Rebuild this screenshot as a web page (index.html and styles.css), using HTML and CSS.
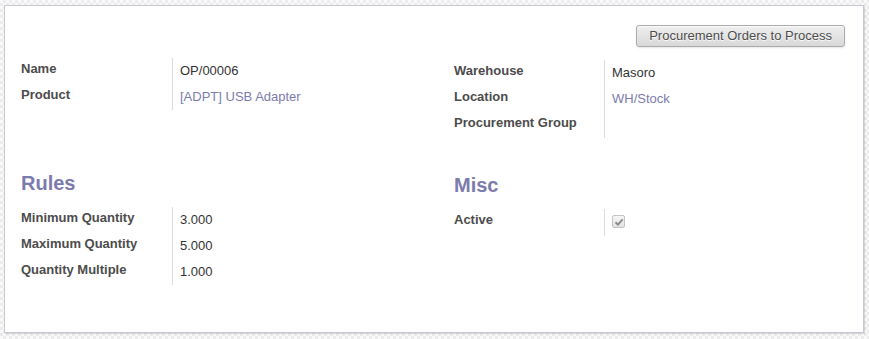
FILE: index.html
```html
<!DOCTYPE html>
<html lang="en">
<head>
<meta charset="UTF-8" />
<title>OP/00006 - Reordering Rule</title>
<link rel="stylesheet" href="styles.css">
</head>
<body>
  <div class="sheet">
    <div class="sheet-header">
      <button class="btn" type="button">Procurement Orders to Process</button>
    </div>
    <div class="groups">
      <!-- general info -->
      <div class="group">
        <div class="row">
          <div class="label">Name</div>
          <div class="value">OP/00006</div>
        </div>
        <div class="row">
          <div class="label">Product</div>
          <div class="value"><a href="#">[ADPT] USB Adapter</a></div>
        </div>
      </div>
      <div class="group group-right">
        <div class="row">
          <div class="label">Warehouse</div>
          <div class="value">Masoro</div>
        </div>
        <div class="row">
          <div class="label">Location</div>
          <div class="value"><a href="#">WH/Stock</a></div>
        </div>
        <div class="row">
          <div class="label">Procurement Group</div>
          <div class="value"></div>
        </div>
      </div>

      <!-- rules / misc -->
      <div class="group group-titled">
        <h2 class="separator">Rules</h2>
        <div class="row">
          <div class="label">Minimum Quantity</div>
          <div class="value">3.000</div>
        </div>
        <div class="row">
          <div class="label">Maximum Quantity</div>
          <div class="value">5.000</div>
        </div>
        <div class="row">
          <div class="label">Quantity Multiple</div>
          <div class="value">1.000</div>
        </div>
      </div>
      <div class="group group-titled group-right">
        <h2 class="separator">Misc</h2>
        <div class="row">
          <div class="label">Active</div>
          <div class="value">
            <span class="checkbox" aria-label="checked">
              <svg width="10" height="10" viewBox="0 0 10 10"><path d="M1.5 5.2 L4 7.6 L8.6 2.3" fill="none" stroke="#8a8a8a" stroke-width="1.9"/></svg>
            </span>
          </div>
        </div>
      </div>
    </div>
  </div>
</body>
</html>
```

FILE: styles.css
```css
* {
  box-sizing: border-box;
}
body {
  margin: 0;
  height: 339px;
  overflow: hidden;
  font-family: "Liberation Sans", Arial, Helvetica, sans-serif;
  font-size: 13px;
  color: #4c4c4c;
  background-color: #f4f4f4;
  background-image: repeating-conic-gradient(#ececec 0 25%, #f9f9f9 0 50%);
  background-size: 6px 6px;
}
.sheet {
  width: 860px;
  margin: 5px 0 0 4px;
  padding: 19px 18px 47px 16px;
  background: #fff;
  border: 1px solid #c8c8d3;
  box-shadow: 1px 1px 1px rgba(0,0,0,0.12);
}
.sheet-header {
  display: flex;
  justify-content: flex-end;
}
.btn {
  font-family: inherit;
  font-size: 13px;
  line-height: 14px;
  height: 22px;
  padding: 3px 12px;
  color: #4c4c4c;
  text-shadow: 0 1px 1px #fff;
  background: linear-gradient(to bottom, #efefef, #d8d8d8);
  border: 1px solid #ababab;
  border-radius: 3px;
  box-shadow: 0 1px 2px rgba(0,0,0,0.1), inset 0 1px 1px rgba(255,255,255,0.8);
  cursor: pointer;
}
.groups {
  display: grid;
  grid-template-columns: 391px 391px;
  column-gap: 42px;
  margin-top: 11px;
}
.group-right {
  margin-top: 2px;
}
.group-titled {
  padding-top: 33px;
}
.separator {
  margin: 0 0 12px 0;
  font-size: 20px;
  line-height: 24px;
  font-weight: bold;
  color: #7c7bad;
}
.row {
  display: flex;
  min-height: 26px;
}
.label {
  width: 151px;
  flex-shrink: 0;
  padding-top: 3px;
  line-height: 15px;
  font-weight: bold;
}
.group-right .label {
  width: 150px;
}
.value {
  flex: 1;
  padding: 5px 0 6px 7px;
  line-height: 15px;
  color: #333;
  border-left: 1px solid #dcdcdc;
}
.value a {
  color: #7c7bad;
  text-decoration: none;
}
.checkbox {
  display: inline-flex;
  align-items: center;
  justify-content: center;
  width: 13px;
  height: 13px;
  margin-top: 1px;
  border: 1px solid #c4c4c4;
  border-radius: 2px;
  background: linear-gradient(to bottom, #f6f6f6, #e2e2e2);
}
```
